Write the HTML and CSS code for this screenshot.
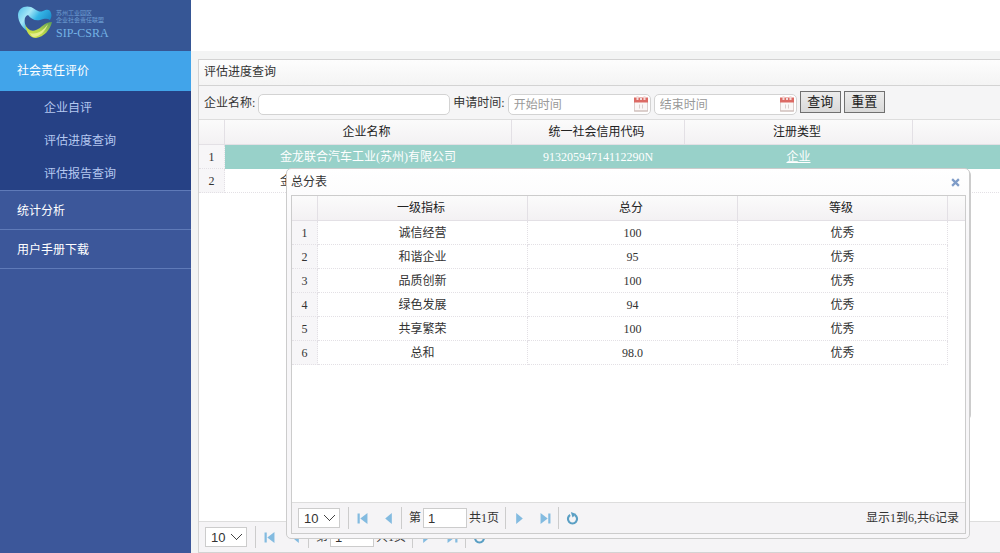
FILE: index.html
```html
<!DOCTYPE html>
<html lang="zh-CN">
<head>
  <meta charset="UTF-8">
  <title>评估进度查询</title>
  <link rel="stylesheet" href="styles.css">
</head>
<body>
  <svg class="defs" aria-hidden="true">
    <symbol id="i-first" viewBox="0 0 10 10"><path d="M0.500 0.500h2v9h-2zM9.500 0v10L3 5z"/></symbol>
    <symbol id="i-prev" viewBox="0 0 10 10"><path d="M8 0v10L2 5z"/></symbol>
    <symbol id="i-next" viewBox="0 0 10 10"><path d="M2 0v10L8 5z"/></symbol>
    <symbol id="i-last" viewBox="0 0 10 10"><path d="M7.500 0.500h2v9h-2zM0.500 0v10L7 5z"/></symbol>
    <symbol id="i-reload" viewBox="0 0 12 12"><path d="M3.800 2.800A4.200 4.200 0 1 0 8.200 2.800" fill="none" stroke="#5a9fc4" stroke-width="2"/><path d="M4.500 0l5 1.800L6 5z" fill="#5a9fc4"/></symbol>
    <symbol id="i-date" viewBox="0 0 14 16">
      <path d="M0.500 4h13v11h-13z" fill="#fbf7f6" stroke="#dccfcd"/>
      <path d="M0 1.500h14v5H0z" fill="#dc6a64"/>
      <path d="M2.500 0h2v4h-2zM9.500 0h2v4h-2z" fill="#f3dcda"/>
      <path d="M6 2h2v2H6z" fill="#f3dcda"/>
      <path d="M5 8.500h1v4H5zM8 8.500h1v4H8z" fill="#d9cfcd"/>
      <path d="M0 14.500h14v1H0z" fill="#cbb8b5"/>
    </symbol>
  </svg>

  <nav class="sidebar">
    <div class="logo">
      <svg class="logo-mark" viewBox="0 0 36 33">
        <defs>
          <linearGradient id="blue" x1="0" y1="0" x2="1" y2="0.6">
            <stop offset="0" stop-color="#4fc0ea"/>
            <stop offset="0.35" stop-color="#a5e6f7"/>
            <stop offset="0.6" stop-color="#35b5e6"/>
            <stop offset="1" stop-color="#1583c4"/>
          </linearGradient>
          <linearGradient id="green" x1="0" y1="1" x2="1" y2="0">
            <stop offset="0" stop-color="#dbe64a"/>
            <stop offset="0.5" stop-color="#b5d64a"/>
            <stop offset="1" stop-color="#5c9c58"/>
          </linearGradient>
        </defs>
        <path d="M1 9C1 2 8-1 14 1c5 2 7 6 12 4 4-2 7-2 8 2 1 3 0 5-1 7-3-2-6-1-10 0-5 1-9-1-12-5-3 1-4 4-3 9 1 4 3 7 5 9C6 23 1 16 1 9z" fill="url(#blue)"/>
        <path d="M35 16c-2 8-8 15-16 16-6 0-10-6-11-14 2 5 6 8 11 6 6-2 8-8 16-8z" fill="url(#green)"/>
        <path d="M13 27c7 2 13-2 18-9-3 8-8 12-14 13-2 0-3-2-4-4z" fill="#e6ee8a"/>
      </svg>
      <div class="logo-text">
        <span>苏州工业园区</span>
        <span>企业社会责任联盟</span>
        <strong>SIP-CSRA</strong>
      </div>
    </div>
    <a class="menu active" href="#">社会责任评价</a>
    <div class="submenu">
      <a href="#">企业自评</a>
      <a href="#">评估进度查询</a>
      <a href="#">评估报告查询</a>
    </div>
    <a class="menu" href="#">统计分析</a>
    <a class="menu" href="#">用户手册下载</a>
  </nav>

  <main class="main">
    <header class="topbar"></header>
    <section class="panel">
      <h1 class="panel-title">评估进度查询</h1>
      <form class="toolbar">
        <label for="company">企业名称:</label>
        <input class="text company" type="text" id="company">
        <label for="start">申请时间:</label>
        <span class="date">
          <input class="text" type="text" id="start" placeholder="开始时间">
          <svg><use href="#i-date"/></svg>
        </span>
        <span class="date">
          <input class="text" type="text" id="end" placeholder="结束时间" aria-label="结束时间">
          <svg><use href="#i-date"/></svg>
        </span>
        <button class="btn" type="button">查询</button>
        <button class="btn" type="reset">重置</button>
      </form>
      <div class="grid-body">
        <table class="grid list">
          <colgroup><col class="c-num"><col class="c-name"><col class="c-code"><col class="c-type"><col></colgroup>
          <thead>
            <tr><th></th><th>企业名称</th><th>统一社会信用代码</th><th>注册类型</th><th></th></tr>
          </thead>
          <tbody>
            <tr class="selected"><td>1</td><td>金龙联合汽车工业(苏州)有限公司</td><td>91320594714112290N</td><td><a href="#">企业</a></td><td></td></tr>
            <tr><td>2</td><td>金龙联合汽车工业(苏州)有限公司</td><td>91320594714112290N</td><td><a href="#">企业</a></td><td></td></tr>
          </tbody>
        </table>
      </div>
      <div class="pager">
        <select aria-label="每页条数"><option>10</option></select>
        <i class="sep"></i>
        <button type="button" aria-label="首页"><svg><use href="#i-first"/></svg></button>
        <button type="button" aria-label="上一页"><svg><use href="#i-prev"/></svg></button>
        <i class="sep"></i>
        <label class="page">第<input type="text" value="1">共1页</label>
        <i class="sep"></i>
        <button type="button" aria-label="下一页"><svg><use href="#i-next"/></svg></button>
        <button type="button" aria-label="末页"><svg><use href="#i-last"/></svg></button>
        <i class="sep"></i>
        <button type="button" aria-label="刷新"><svg class="reload"><use href="#i-reload"/></svg></button>
      </div>
    </section>
  </main>

  <div class="window-shadow"></div>
  <section class="window" role="dialog" aria-labelledby="window-title">
    <div class="window-header">
      <h2 id="window-title">总分表</h2>
      <button class="close" type="button" aria-label="关闭">
        <svg viewBox="0 0 8 8"><path d="M1 1l6 6M7 1L1 7"/></svg>
      </button>
    </div>
    <div class="window-body">
      <div class="grid-body">
        <table class="grid score">
          <colgroup><col class="c-num"><col class="c-score"><col class="c-score"><col class="c-score"><col></colgroup>
          <thead>
            <tr><th></th><th>一级指标</th><th>总分</th><th>等级</th><th></th></tr>
          </thead>
          <tbody>
            <tr><td>1</td><td>诚信经营</td><td>100</td><td>优秀</td></tr>
            <tr><td>2</td><td>和谐企业</td><td>95</td><td>优秀</td></tr>
            <tr><td>3</td><td>品质创新</td><td>100</td><td>优秀</td></tr>
            <tr><td>4</td><td>绿色发展</td><td>94</td><td>优秀</td></tr>
            <tr><td>5</td><td>共享繁荣</td><td>100</td><td>优秀</td></tr>
            <tr><td>6</td><td>总和</td><td>98.0</td><td>优秀</td></tr>
          </tbody>
        </table>
      </div>
      <div class="pager">
        <select aria-label="每页条数"><option>10</option></select>
        <i class="sep"></i>
        <button type="button" aria-label="首页"><svg><use href="#i-first"/></svg></button>
        <button type="button" aria-label="上一页"><svg><use href="#i-prev"/></svg></button>
        <i class="sep"></i>
        <label class="page">第<input type="text" value="1">共1页</label>
        <i class="sep"></i>
        <button type="button" aria-label="下一页"><svg><use href="#i-next"/></svg></button>
        <button type="button" aria-label="末页"><svg><use href="#i-last"/></svg></button>
        <i class="sep"></i>
        <button type="button" aria-label="刷新"><svg class="reload"><use href="#i-reload"/></svg></button>
        <span class="info">显示1到6,共6记录</span>
      </div>
    </div>
  </section>
</body>
</html>
```

FILE: styles.css
```css
* {
  box-sizing: border-box;
}
body {
  margin: 0;
  display: flex;
  height: 100vh;
  overflow: hidden;
  background: #f3f4f4;
  color: #333;
  font: 12px/16px "Liberation Serif", "Noto Sans CJK SC", serif;
}
.defs {
  position: absolute;
  width: 0;
  height: 0;
}
input,
select,
button {
  margin: 0;
  font-family: "Liberation Sans", "Noto Sans CJK SC", sans-serif;
}

/* sidebar */
.sidebar {
  flex: none;
  width: 191px;
  background: #3c579a;
}
.logo {
  display: flex;
  gap: 3px;
  height: 51px;
  padding: 6px 0 0 17px;
  background: #365695;
}
.logo-mark {
  width: 36px;
  height: 33px;
}
.logo-text {
  padding-top: 4px;
  color: #6f9fd4;
  font-size: 6px;
  line-height: 7px;
}
.logo-text span {
  display: block;
}
.logo-text strong {
  display: block;
  color: #74b2e4;
  font-size: 12px;
  font-weight: normal;
  line-height: 18px;
}
.sidebar a {
  display: block;
  color: #fff;
  text-decoration: none;
}
.menu {
  height: 39px;
  padding-left: 17px;
  line-height: 40px;
  border-bottom: 1px solid #5f7ab8;
}
.menu.active {
  height: 40px;
  background: #41a4ea;
  border: 0;
}
.submenu {
  height: 100px;
  background: #264185;
  border-bottom: 1px solid #5f7ab8;
}
.sidebar .submenu a {
  height: 33px;
  padding-left: 44px;
  line-height: 34px;
  color: #b5c8f0;
}

/* main panel */
.main {
  flex: 1;
  min-width: 0;
  display: flex;
  flex-direction: column;
}
.topbar {
  height: 51px;
  background: #fff;
}
.panel {
  flex: 1;
  min-height: 0;
  display: flex;
  flex-direction: column;
  margin: 8px 0 0 7px;
  border: 1px solid #d3d3d3;
  border-right: 0;
}
.panel-title {
  margin: 0;
  height: 26px;
  padding-left: 5px;
  font-size: 12px;
  font-weight: normal;
  line-height: 25px;
  background: linear-gradient(#fdfdfd, #f4f4f4);
  border-bottom: 1px solid #d3d3d3;
}
.toolbar {
  display: flex;
  gap: 3px;
  height: 34px;
  padding: 5px 5px 0;
  line-height: 24px;
  background: #f5f5f6;
  border-bottom: 1px solid #ddd;
}
.text {
  width: 143px;
  height: 21px;
  margin-top: 3px;
  padding: 0 5px;
  font-size: 12px;
  background: #fff;
  border: 1px solid #d3d3d3;
  border-radius: 5px;
}
.text.company {
  width: 192px;
}
.text::placeholder {
  color: #999;
}
.date {
  position: relative;
}
.date .text {
  display: block;
}
.date svg {
  position: absolute;
  top: 5px;
  right: 3px;
  width: 14px;
  height: 16px;
}
.btn {
  width: 41px;
  height: 22px;
  padding: 0;
  font-size: 13px;
  line-height: 20px;
  color: #222;
  background: linear-gradient(#ececec, #d9d9d9);
  border: 1px solid #707070;
}

/* data grids */
.grid-body {
  flex: 1;
  min-height: 0;
  overflow: hidden;
  background: #fff;
}
.grid {
  table-layout: fixed;
  border-spacing: 0;
  width: 100%;
}
.list {
  min-width: 900px;
}
.c-num { width: 26px; }
.c-name { width: 287px; }
.c-code { width: 173px; }
.c-type { width: 228px; }
.c-score { width: 210px; }
.grid th,
.grid td {
  height: 24px;
  padding: 0;
  font-weight: normal;
  line-height: 16px;
  text-align: center;
  white-space: nowrap;
  border-right: 1px dotted #e3e0e5;
  border-bottom: 1px dotted #e3e0e5;
}
.grid th {
  height: 25px;
  padding-right: 3px;
  color: #222;
  background: linear-gradient(#fbfbfb, #f3f1f3);
  border-right-style: solid;
  border-bottom-style: solid;
}
.grid th:last-child {
  border-right: 0;
}
.grid td:first-child {
  background: #f7f6f8;
}
.grid td a {
  color: inherit;
}
.grid .selected td:not(:first-child) {
  color: #fff;
  background: #98d1c9;
  border-color: #98d1c9;
}

/* pager */
.pager {
  display: flex;
  align-items: center;
  flex: none;
  height: 31px;
  padding: 0 6px;
  background: #f5f4f6;
  border-top: 1px solid #ddd;
}
.pager select {
  appearance: none;
  width: 42px;
  height: 20px;
  margin-right: 8px;
  padding: 0 0 0 5px;
  font-size: 13px;
  color: #333;
  background: #fff;
  background-image: linear-gradient(45deg, transparent 46%, #444 46%, #444 56%, transparent 56%), linear-gradient(-45deg, transparent 46%, #444 46%, #444 56%, transparent 56%);
  background-position: 25px 6px, 30px 6px;
  background-size: 6px 6px;
  background-repeat: no-repeat;
  border: 1px solid #ccc;
  border-radius: 0;
}
.sep {
  width: 1px;
  height: 22px;
  background: #ccc;
}
.pager button {
  display: flex;
  align-items: center;
  justify-content: center;
  width: 26px;
  height: 24px;
  padding: 0;
  background: none;
  border: 0;
}
.pager svg {
  width: 11px;
  height: 11px;
  fill: #83bbe0;
}
.pager .reload {
  width: 13px;
  height: 13px;
}
.page {
  display: flex;
  align-items: center;
  gap: 2px;
  margin: 0 6px 0 7px;
}
.page input {
  width: 44px;
  height: 20px;
  padding: 0 4px;
  font-size: 13px;
  color: #333;
  border: 1px solid #ccc;
}
.info {
  margin-left: auto;
}

/* popup window */
.window {
  position: absolute;
  top: 168px;
  left: 286px;
  right: 30px;
  height: 371px;
  display: flex;
  flex-direction: column;
  padding: 0 3px 4px 4px;
  background: linear-gradient(#fff, #f7f6f8 20%);
  border: 1px solid #ccc;
  border-radius: 5px;
}
.window-shadow {
  position: absolute;
  top: 170px;
  left: 289px;
  right: 29px;
  height: 250px;
  background: #ccc;
  border-radius: 5px;
}
.window-header {
  display: flex;
  align-items: center;
  justify-content: space-between;
  height: 26px;
}
.window-header h2 {
  margin: 0;
  font-size: 12px;
  font-weight: normal;
}
.close {
  display: flex;
  padding: 4px;
  margin-right: 2px;
  background: none;
  border: 0;
}
.close svg {
  width: 9px;
  height: 9px;
  fill: none;
  stroke: #7f9cc8;
  stroke-width: 2;
}
.window-body {
  flex: 1;
  min-height: 0;
  display: flex;
  flex-direction: column;
  border: 1px solid #ccc;
}
```
